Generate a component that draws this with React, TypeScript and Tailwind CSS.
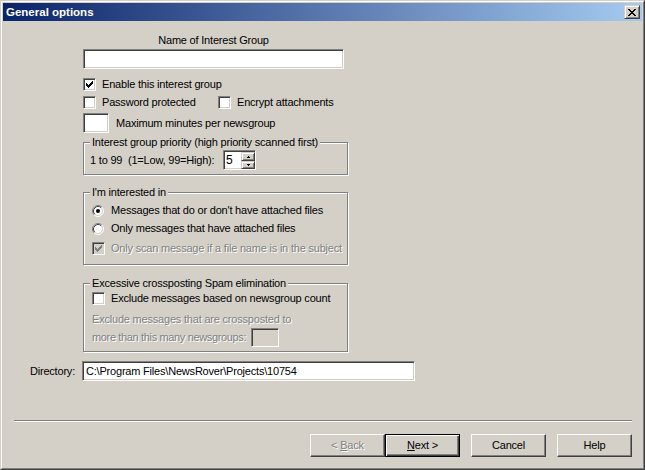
import type { ReactNode } from "react";

const sunken =
  "border border-t-[#808080] border-l-[#808080] border-b-white border-r-white shadow-[inset_1px_1px_0_#404040,inset_-1px_-1px_0_#d4d0c8]";
const raised =
  "border border-t-[#d4d0c8] border-l-[#d4d0c8] border-r-[#404040] border-b-[#404040] shadow-[inset_1px_1px_0_#fff,inset_-1px_-1px_0_#808080]";
const disabledText = "text-[#808080] [text-shadow:1px_1px_0_#fff]";

function CheckBox({ checked = false, disabled = false }: { checked?: boolean; disabled?: boolean }) {
  return (
    <span className={`inline-block w-[13px] h-[13px] shrink-0 ${sunken} ${disabled ? "bg-[#d4d0c8]" : "bg-white"}`}>
      {checked && (
        <svg width="11" height="11" viewBox="1 1 11 11" shapeRendering="crispEdges">
          <path
            fill={disabled ? "#808080" : "#000"}
            d="M3 5h1v3H3zM4 6h1v3H4zM5 7h1v3H5zM6 6h1v3H6zM7 5h1v3H7zM8 4h1v3H8zM9 3h1v3H9z"
          />
        </svg>
      )}
    </span>
  );
}

function Radio({ checked = false }: { checked?: boolean }) {
  return (
    <svg width="12" height="12" viewBox="0 0 12 12" className="shrink-0">
      <circle cx="6" cy="6" r="5" fill="#fff" />
      <path d="M2.11 9.89A5.5 5.5 0 0 1 9.89 2.11" stroke="#808080" fill="none" />
      <path d="M9.89 2.11A5.5 5.5 0 0 1 2.11 9.89" stroke="#fff" fill="none" />
      <path d="M2.82 9.18A4.5 4.5 0 0 1 9.18 2.82" stroke="#404040" fill="none" />
      <path d="M9.18 2.82A4.5 4.5 0 0 1 2.82 9.18" stroke="#d4d0c8" fill="none" />
      {checked && <circle cx="6" cy="6" r="2" fill="#000" />}
    </svg>
  );
}

function GroupBox({ title, className = "", children }: { title: string; className?: string; children: ReactNode }) {
  return (
    <div className={`relative w-[265px] border border-[#808080] shadow-[inset_1px_1px_0_#fff,1px_1px_0_#fff] ${className}`}>
      <span className="absolute -top-[7px] left-[6px] px-[2px] bg-[#d4d0c8] leading-[13px] whitespace-nowrap">{title}</span>
      {children}
    </div>
  );
}

function Button({ children, isDefault = false, disabled = false }: { children: ReactNode; isDefault?: boolean; disabled?: boolean }) {
  const frame = isDefault
    ? "border border-black shadow-[inset_1px_1px_0_#fff,inset_-1px_-1px_0_#404040,inset_-2px_-2px_0_#808080]"
    : "border border-t-white border-l-white border-r-[#404040] border-b-[#404040] shadow-[inset_-1px_-1px_0_#808080]";
  return (
    <div className={`w-[75px] h-[23px] flex items-center justify-center bg-[#d4d0c8] whitespace-pre ${frame} ${disabled ? disabledText : ""}`}>
      {children}
    </div>
  );
}

export default function App() {
  return (
    <div className="w-[645px] h-[470px] bg-[#d4d0c8] font-['Liberation_Sans',Arial,sans-serif] text-[11px] leading-[13px] tracking-[-0.2px] text-black whitespace-nowrap border border-t-[#d4d0c8] border-l-[#d4d0c8] border-r-[#404040] border-b-[#404040]">
      <div className="h-full p-[1px] border border-t-white border-l-white border-r-[#808080] border-b-[#808080] flex flex-col">
        {/* Title bar */}
        <div className="h-[18px] shrink-0 flex items-center justify-between pl-[3px] pr-[2px] bg-[linear-gradient(to_right,#0a246a,#a6caf0)]">
          <span className="text-white font-bold text-[11.5px] tracking-normal">General options</span>
          <div className={`w-[16px] h-[14px] flex items-center justify-center bg-[#d4d0c8] ${raised}`}>
            <svg width="8" height="7" viewBox="0 0 8 7" shapeRendering="crispEdges">
              <path
                fill="#000"
                d="M0 0h2v1H0zM6 0h2v1H6zM1 1h2v1H1zM5 1h2v1H5zM2 2h4v1H2zM3 3h2v1H3zM2 4h4v1H2zM1 5h2v1H1zM5 5h2v1H5zM0 6h2v1H0zM6 6h2v1H6z"
              />
            </svg>
          </div>
        </div>

        {/* Body */}
        <div className="flex flex-col">
          <div className="ml-[80px] mt-[13px] w-[261px] text-center">Name of Interest Group</div>
          <div className={`ml-[80px] mt-[2px] w-[261px] h-[20px] bg-white ${sunken}`} />

          <div className="ml-[80px] mt-[9px] h-[13px] flex items-center">
            <CheckBox checked />
            <span className="ml-[6px]">Enable this interest group</span>
          </div>
          <div className="ml-[80px] mt-[5px] h-[13px] flex items-center">
            <div className="w-[135px] flex items-center">
              <CheckBox />
              <span className="ml-[6px]">Password protected</span>
            </div>
            <CheckBox />
            <span className="ml-[6px]">Encrypt attachments</span>
          </div>
          <div className="ml-[80px] mt-[4px] flex items-center">
            <div className={`w-[26px] h-[20px] bg-white ${sunken}`} />
            <span className="ml-[7px]">Maximum minutes per newsgroup</span>
          </div>

          <GroupBox title="Interest group priority (high priority scanned first)" className="ml-[80px] mt-[9px] pt-[7px] pb-[4px] pl-[6px]">
            <div className="flex items-center">
              <span className="w-[133px] whitespace-pre">1 to 99  (1=Low, 99=High):</span>
              <div className={`w-[33px] h-[20px] flex bg-white ${sunken}`}>
                <span className="flex-1 pl-[2px] leading-[18px] text-[12px]">5</span>
                <div className="w-[14px] flex flex-col pt-[1px]">
                  <div className={`h-[9px] flex items-center justify-center bg-[#d4d0c8] ${raised}`}>
                    <svg width="3" height="2" viewBox="0 0 3 2" shapeRendering="crispEdges">
                      <path fill="#000" d="M1 0h1v1H1zM0 1h3v1H0z" />
                    </svg>
                  </div>
                  <div className={`h-[8px] flex items-center justify-center bg-[#d4d0c8] ${raised}`}>
                    <svg width="3" height="2" viewBox="0 0 3 2" shapeRendering="crispEdges">
                      <path fill="#000" d="M0 0h3v1H0zM1 1h1v1H1z" />
                    </svg>
                  </div>
                </div>
              </div>
            </div>
          </GroupBox>

          <GroupBox title="I'm interested in" className="ml-[80px] mt-[17px] pt-[11px] pb-[9px] pl-[8px]">
            <div className="h-[13px] flex items-center">
              <Radio checked />
              <span className="ml-[7px]">Messages that do or don't have attached files</span>
            </div>
            <div className="mt-[5px] h-[13px] flex items-center">
              <Radio />
              <span className="ml-[7px]">Only messages that have attached files</span>
            </div>
            <div className="mt-[7px] h-[13px] flex items-center">
              <CheckBox checked disabled />
              <span className={`ml-[6px] ${disabledText}`}>Only scan message if a file name is in the subject</span>
            </div>
          </GroupBox>

          <GroupBox title="Excessive crossposting Spam elimination" className="ml-[80px] mt-[18px] pt-[8px] pb-[4px] pl-[8px]">
            <div className="h-[13px] flex items-center">
              <CheckBox />
              <span className="ml-[6px]">Exclude messages based on newsgroup count</span>
            </div>
            <div className={`mt-[8px] ${disabledText}`}>Exclude messages that are crossposted to</div>
            <div className="mt-[1px] h-[20px] flex items-center">
              <span className={`w-[159px] tracking-[-0.35px] ${disabledText}`}>more than this many newsgroups:</span>
              <div className={`w-[28px] h-[19px] bg-[#d4d0c8] ${sunken}`} />
            </div>
          </GroupBox>

          <div className="mt-[9px] flex items-center">
            <span className="w-[72px] text-right">Directory:</span>
            <div className={`ml-[7px] w-[333px] h-[20px] bg-white pl-[3px] leading-[18px] ${sunken}`}>
              C:\Program Files\NewsRover\Projects\10754
            </div>
          </div>

          <div className="ml-[11px] mt-[39px] w-[618px] h-[2px] border-t border-t-[#808080] border-b border-b-white" />

          <div className="mt-[12px] pr-[10px] flex justify-end">
            <Button disabled>
              {"< "}<span className="underline">B</span>ack
            </Button>
            <Button isDefault>
              <span className="underline">N</span>{"ext >"}
            </Button>
            <div className="ml-[11px]">
              <Button>Cancel</Button>
            </div>
            <div className="ml-[11px]">
              <Button>Help</Button>
            </div>
          </div>
        </div>
      </div>
    </div>
  );
}
